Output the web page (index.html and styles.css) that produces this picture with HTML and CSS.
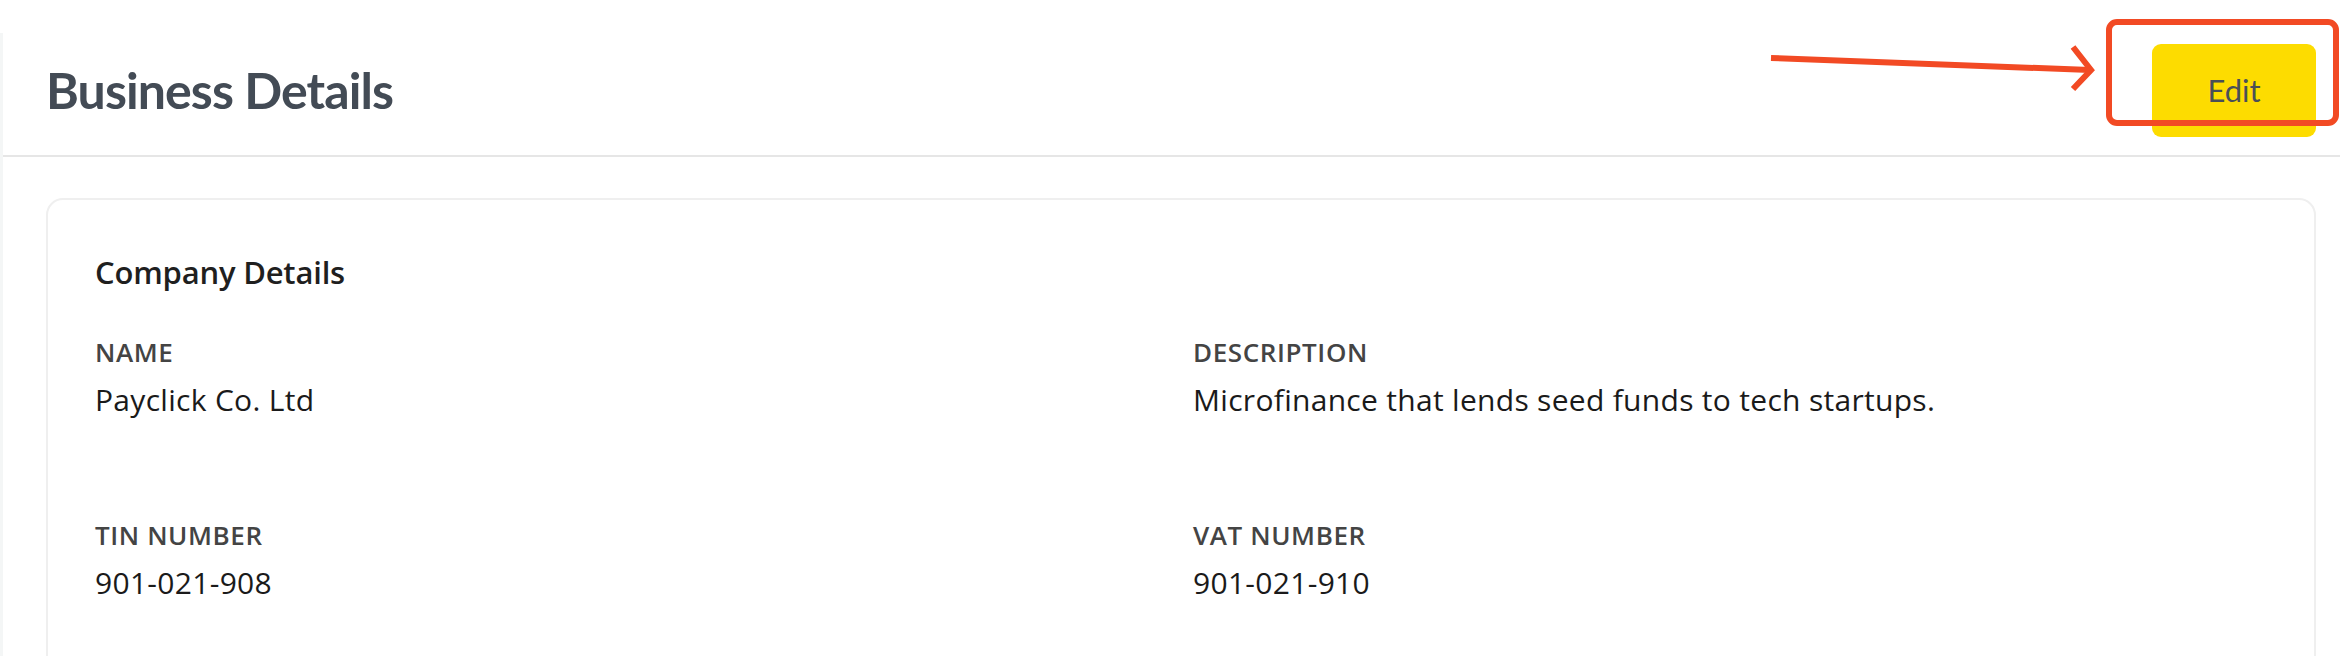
FILE: index.html
```html
<!DOCTYPE html>
<html lang="en">
<head>
    <meta charset="UTF-8">
    <meta name="viewport" content="width=device-width, initial-scale=1.0">
    <title>Business Details</title>
    <link rel="stylesheet" href="styles.css">
</head>
<body>
    <div class="main">
        <header class="page-header">
            <h1>Business Details</h1>
            <button class="edit-btn">Edit</button>
        </header>

        <section class="card">
            <h2>Company Details</h2>
            <div class="fields">
                <div class="field">
                    <div class="label">NAME</div>
                    <div class="value">Payclick Co. Ltd</div>
                </div>
                <div class="field">
                    <div class="label">DESCRIPTION</div>
                    <div class="value">Microfinance that lends seed funds to tech startups.</div>
                </div>
                <div class="field">
                    <div class="label">TIN NUMBER</div>
                    <div class="value">901-021-908</div>
                </div>
                <div class="field">
                    <div class="label">VAT NUMBER</div>
                    <div class="value">901-021-910</div>
                </div>
            </div>
        </section>
    </div>

    <!-- annotation drawn over the screenshot -->
    <svg class="annotation" width="2340" height="160" viewBox="0 0 2340 160">
        <line x1="1771" y1="58" x2="2090" y2="70" stroke="#f24a24" stroke-width="6"/>
        <polyline points="2073,47 2091,70 2073,89" fill="none" stroke="#f24a24" stroke-width="6"/>
        <rect x="2109" y="22" width="227" height="101" rx="8" fill="none" stroke="#f24a24" stroke-width="6"/>
    </svg>
</body>
</html>
```

FILE: styles.css
```css
/* General Reset */
html, body {
    margin: 0;
    padding: 0;
    background: #fff;
    font-family: 'Open Sans', 'Liberation Sans', sans-serif;
}

/* Main panel */
.main {
    margin-top: 33px;
    border-left: 3px solid #f4f6f6;
    min-height: 700px;
}

.page-header {
    height: 124px;
    box-sizing: border-box;
    display: flex;
    align-items: center;
    justify-content: space-between;
    padding: 0 24px 8px 43px;
    border-bottom: 2px solid #e6e6e6;
}

h1 {
    margin: 0;
    font-family: 'Lato', sans-serif;
    font-size: 50px;
    font-weight: 700;
    color: #434b55;
    letter-spacing: -0.9px;
}

.edit-btn {
    width: 164px;
    height: 93px;
    border: none;
    border-radius: 9px;
    background: #fddc00;
    color: #4a4f57;
    font-family: 'Lato', sans-serif;
    font-size: 31px;
    cursor: pointer;
}

/* Card */
.card {
    margin: 41px 24px 0 43px;
    border: 2px solid #efefef;
    border-radius: 17px;
    padding: 52px 47px 120px;
}

h2 {
    margin: 0 0 44px;
    font-size: 31px;
    font-weight: 600;
    color: #1f1f1f;
    line-height: 40px;
    letter-spacing: -0.2px;
}

.fields {
    display: grid;
    grid-template-columns: 1fr 1fr;
    column-gap: 24px;
    row-gap: 101px;
}

.label {
    font-size: 26px;
    font-weight: 600;
    color: #444;
    line-height: 32px;
    margin-bottom: 14px;
    letter-spacing: 0.6px;
}

.value {
    font-size: 30px;
    color: #1a1a1a;
    line-height: 36px;
    letter-spacing: 0.3px;
}

.annotation {
    position: absolute;
    top: 0;
    left: 0;
    pointer-events: none;
}
```
